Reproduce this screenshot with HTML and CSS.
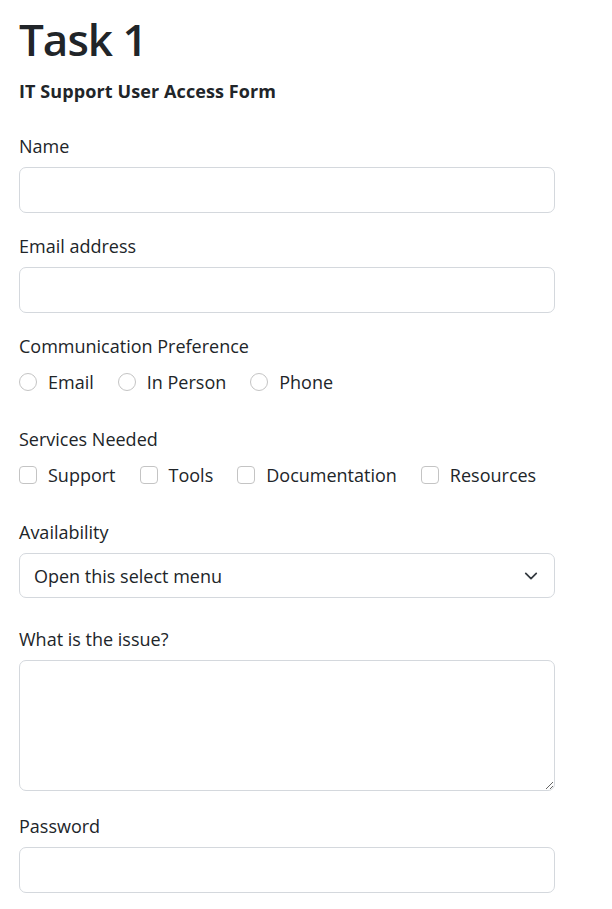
FILE: index.html
```html
<!DOCTYPE html>
<html lang="en">
<head>
<meta charset="utf-8">
<title>Task 1</title>
<link rel="stylesheet" href="styles.css">
</head>
<body>
<main class="page">
  <h1 class="title">Task 1</h1>
  <h2 class="subtitle">IT Support User Access Form</h2>
  <form class="form">
    <div class="group">
      <label class="label" for="name">Name</label>
      <input class="control" type="text" id="name">
    </div>
    <div class="group">
      <label class="label" for="email">Email address</label>
      <input class="control" type="email" id="email">
    </div>
    <div class="group group-checks">
      <div class="label">Communication Preference</div>
      <div class="checks">
        <label class="check"><span class="box radio"></span>Email</label>
        <label class="check"><span class="box radio"></span>In Person</label>
        <label class="check"><span class="box radio"></span>Phone</label>
      </div>
    </div>
    <div class="group group-checks">
      <div class="label">Services Needed</div>
      <div class="checks">
        <label class="check"><span class="box square"></span>Support</label>
        <label class="check"><span class="box square"></span>Tools</label>
        <label class="check"><span class="box square"></span>Documentation</label>
        <label class="check"><span class="box square"></span>Resources</label>
      </div>
    </div>
    <div class="group group-select">
      <label class="label" for="avail">Availability</label>
      <select class="control select" id="avail">
        <option>Open this select menu</option>
      </select>
    </div>
    <div class="group group-area">
      <label class="label" for="issue">What is the issue?</label>
      <textarea class="control area" id="issue"></textarea>
    </div>
    <div class="group">
      <label class="label" for="pw">Password</label>
      <input class="control" type="password" id="pw">
    </div>
  </form>
</main>
</body>
</html>
```
FILE: styles.css
```css
* { box-sizing: border-box; }
html, body { margin: 0; padding: 0; background: #fff; }
body {
  font-family: "Open Sans", "Noto Sans", sans-serif;
  color: #212529;
  font-size: 18px;
}
.page {
  width: 555px;
  padding-left: 19px;
}
.title {
  margin: 12px 0 0;
  font-size: 44px;
  line-height: 54px;
  font-weight: 600;
  letter-spacing: -1px;
}
.subtitle {
  margin: 13px 0 0;
  font-size: 18px;
  line-height: 24px;
  font-weight: 700;
  letter-spacing: 0.1px;
}
.form { margin-top: 30px; }
.group {
  display: flex;
  flex-direction: column;
  margin-bottom: 20px;
}
.group-checks { margin-bottom: 29px; }
.group-select { margin-bottom: 28px; }
.group-area { margin-bottom: 22px; }
.label {
  display: block;
  line-height: 26px;
  margin-bottom: 8px;
}
.control {
  display: block;
  width: 100%;
  height: 46px;
  border: 1px solid #d4d8dd;
  border-radius: 7px;
  background: #fff;
  font: inherit;
  color: #212529;
  padding: 0 14px;
  margin: 0;
  outline: none;
}
.select {
  appearance: none;
  -webkit-appearance: none;
  height: 45px;
  background-image: url("data:image/svg+xml,%3csvg xmlns='http://www.w3.org/2000/svg' viewBox='0 0 16 16'%3e%3cpath fill='none' stroke='%23343a40' stroke-linecap='round' stroke-linejoin='round' stroke-width='2' d='m2 5 6 6 6-6'/%3e%3c/svg%3e");
  background-repeat: no-repeat;
  background-position: right 14px center;
  background-size: 18px 14px;
}
.area {
  height: 131px;
  resize: vertical;
  padding: 8px 14px;
}
.checks {
  display: flex;
  gap: 24px;
  height: 30px;
  align-items: center;
}
.check {
  display: flex;
  align-items: center;
  gap: 11px;
  line-height: 26px;
}
.box {
  display: inline-block;
  width: 18px;
  height: 18px;
  border: 1px solid #c4c4c4;
  background: #fff;
  flex: none;
}
.radio { border-radius: 50%; }
.square { border-radius: 4px; }
```
